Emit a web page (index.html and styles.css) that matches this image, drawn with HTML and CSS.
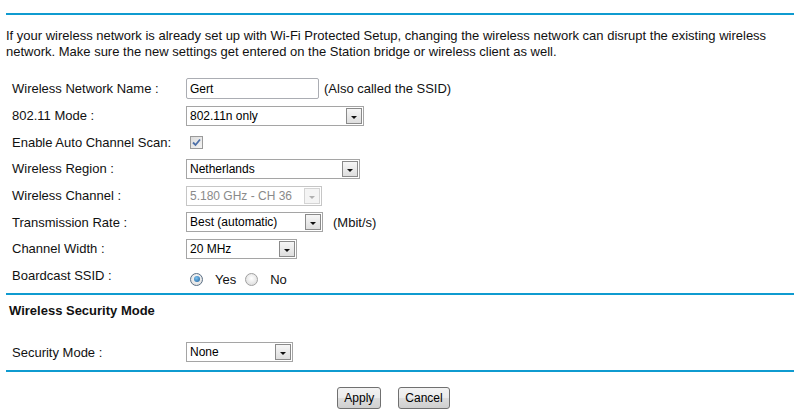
FILE: index.html
```html
<!DOCTYPE html>
<html>
<head>
<meta charset="utf-8">
<link rel="stylesheet" href="styles.css">
</head>
<body>
<div class="page">
  <div class="rule rule-top"></div>
  <p class="intro">If your wireless network is already set up with Wi-Fi Protected Setup, changing the wireless network can disrupt the existing wireless network. Make sure the new settings get entered on the Station bridge or wireless client as well.</p>

  <div class="form form-main">
    <div class="label">Wireless Network Name :</div>
    <div class="ctrl"><input class="text" type="text" value="Gert"><span class="note">(Also called the SSID)</span></div>

    <div class="label">802.11 Mode :</div>
    <div class="ctrl"><span class="sel w-mode"><span class="val">802.11n only</span><span class="arrow"><i></i></span></span></div>

    <div class="label">Enable Auto Channel Scan:</div>
    <div class="ctrl"><span class="check"><svg width="9" height="9" viewBox="0 0 9 9"><path d="M1 4.5 L3.5 7 L8 1.5" fill="none" stroke="#4c6fa8" stroke-width="1.8"/></svg></span></div>

    <div class="label">Wireless Region :</div>
    <div class="ctrl"><span class="sel w-region"><span class="val">Netherlands</span><span class="arrow"><i></i></span></span></div>

    <div class="label">Wireless Channel :</div>
    <div class="ctrl"><span class="sel disabled w-chan"><span class="val">5.180 GHz - CH 36</span><span class="arrow"><i></i></span></span></div>

    <div class="label">Transmission Rate :</div>
    <div class="ctrl"><span class="sel w-rate"><span class="val">Best (automatic)</span><span class="arrow"><i></i></span></span><span class="note note-wide">(Mbit/s)</span></div>

    <div class="label">Channel Width :</div>
    <div class="ctrl"><span class="sel w-width"><span class="val">20 MHz</span><span class="arrow"><i></i></span></span></div>

    <div class="label">Boardcast SSID :</div>
    <div class="ctrl radios"><span class="radio on"></span><span class="rlabel">Yes</span><span class="radio"></span><span class="rlabel">No</span></div>
  </div>

  <div class="rule"></div>
  <h3 class="section">Wireless Security Mode</h3>
  <div class="form form-sec">
    <div class="label">Security Mode :</div>
    <div class="ctrl"><span class="sel w-sec"><span class="val">None</span><span class="arrow"><i></i></span></span></div>
  </div>
  <div class="rule"></div>

  <div class="buttons">
    <button class="btn">Apply</button>
    <button class="btn">Cancel</button>
  </div>
</div>
</body>
</html>
```

FILE: styles.css
```css
html, body {
  margin: 0;
  padding: 0;
  background: #ffffff;
}

body {
  font-family: "Liberation Sans", Arial, sans-serif;
  font-size: 13px;
  color: #111111;
}

.page {
  padding: 13px 7px 0 6px;
}

.rule {
  height: 2px;
  background: #0f9bd0;
}

.intro {
  margin: 13px 0 0 0;
  line-height: 16px;
  color: #111;
}

.form {
  display: grid;
  grid-template-columns: 174px auto;
  grid-auto-rows: 26.7px;
  margin-top: 15.5px;
  padding-left: 6px;
}

.form-main {
  margin-bottom: 4px;
}

.label {
  display: flex;
  align-items: center;
  color: #111;
}

.ctrl {
  display: flex;
  align-items: center;
}

.text {
  box-sizing: border-box;
  width: 133px;
  height: 21px;
  border: 1px solid #abadb3;
  border-radius: 2px;
  padding: 0 3px;
  font-family: "Liberation Sans", Arial, sans-serif;
  font-size: 12px;
  color: #000;
  outline: none;
}

.note {
  margin-left: 5px;
}

.note-wide {
  margin-left: 10px;
}

.sel {
  box-sizing: border-box;
  display: flex;
  align-items: stretch;
  height: 20px;
  border: 1px solid #a5a5a5;
  background: #fff;
  font-size: 12px;
  color: #000;
}

.sel .val {
  flex: 1;
  display: flex;
  align-items: center;
  padding-left: 3px;
  white-space: nowrap;
}

.sel .arrow {
  box-sizing: border-box;
  width: 16px;
  margin: 1px 1px 1px 0;
  border: 1px solid #8a8a8a;
  background: linear-gradient(#f6f6f6, #dedede);
  display: flex;
  align-items: center;
  justify-content: center;
}

.sel .arrow i {
  width: 0;
  height: 0;
  margin-top: 3px;
  border-left: 3px solid transparent;
  border-right: 3px solid transparent;
  border-top: 3px solid #111;
}

.sel.disabled {
  border-color: #c6c6c6;
  color: #8a8a8a;
}

.sel.disabled .arrow {
  border-color: #d4d4d4;
  background: #f4f4f4;
}

.sel.disabled .arrow i {
  border-top-color: #b0b0b0;
}

.w-mode { width: 178px; }
.w-region { width: 174px; }
.w-chan { width: 136px; }
.w-rate { width: 137px; }
.w-width { width: 111px; }
.w-sec { width: 107px; }

.check {
  box-sizing: border-box;
  width: 13px;
  height: 13px;
  margin-left: 4px;
  border: 1px solid #9a9a9a;
  background: linear-gradient(135deg, #dcdcdc, #f4f4f4);
  display: flex;
  align-items: center;
  justify-content: center;
}

.radios {
  padding-top: 7px;
}

.radio {
  box-sizing: border-box;
  width: 13px;
  height: 13px;
  border-radius: 50%;
  border: 1px solid #a0a0a0;
  background: radial-gradient(circle at 50% 40%, #ffffff, #d6d6d6);
  margin-left: 4px;
  display: flex;
  align-items: center;
  justify-content: center;
}

.radio.on {
  border-color: #5a6f85;
}

.radio.on::after {
  content: "";
  width: 6px;
  height: 6px;
  border-radius: 50%;
  background: radial-gradient(circle at 40% 35%, #7cc3f0, #1a5c9a);
}

.rlabel {
  margin-left: 12px;
  margin-right: 9px;
}

.rlabel + .radio {
  margin-left: 0;
}

.section {
  margin: 8px 0 0 3px;
  font-size: 13px;
  font-weight: bold;
  line-height: 16px;
  color: #111;
}

.form-sec {
  margin-top: 20px;
  margin-bottom: 4px;
}

.buttons {
  display: flex;
  justify-content: center;
  gap: 17px;
  padding: 15px 13px 0 0;
}

.btn {
  box-sizing: border-box;
  height: 22px;
  padding: 0 6px;
  font-family: "Liberation Sans", Arial, sans-serif;
  font-size: 12px;
  color: #000;
  border: 1px solid #707070;
  border-radius: 3px;
  background: linear-gradient(#f2f2f2 0%, #ebebeb 50%, #dddddd 51%, #cfcfcf 100%);
}
```
